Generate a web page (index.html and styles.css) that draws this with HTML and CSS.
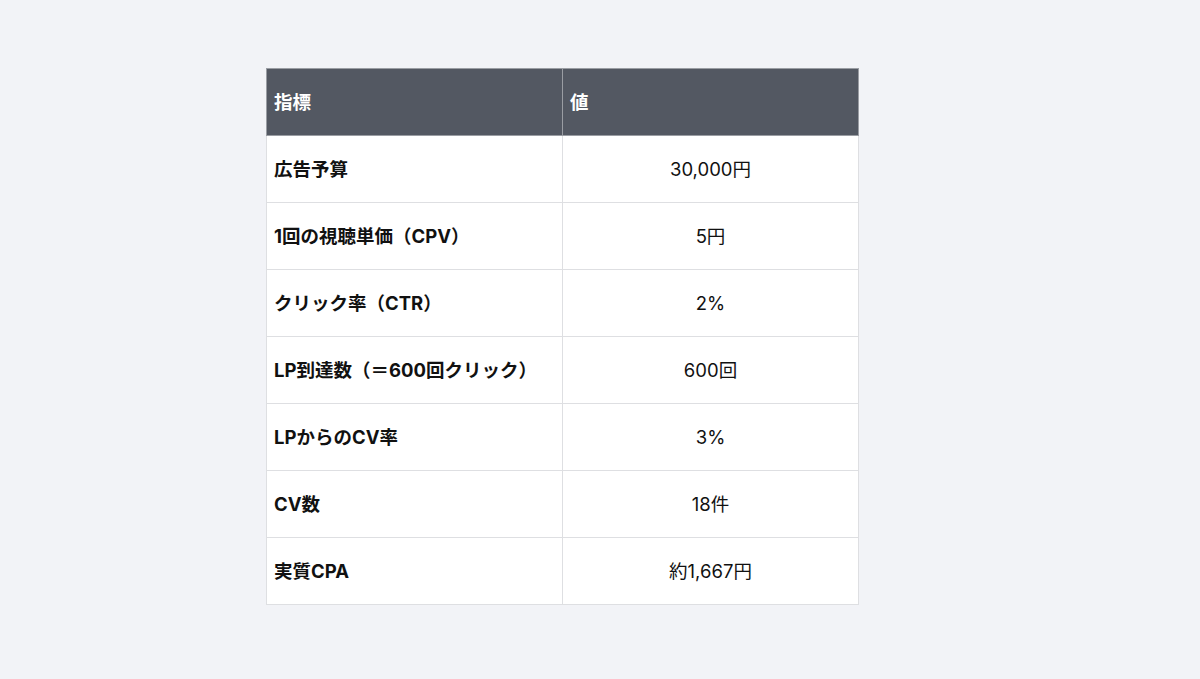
FILE: index.html
```html
<!DOCTYPE html>
<html lang="ja">
<head>
    <meta charset="UTF-8">
    <title>指標</title>
    <link rel="stylesheet" href="styles.css">
</head>
<body>
    <div class="wrap">
        <table class="metrics">
            <thead>
                <tr><th>指標</th><th>値</th></tr>
            </thead>
            <tbody>
                <tr><td class="label">広告予算</td><td class="value">30,000円</td></tr>
                <tr><td class="label">1回の視聴単価（CPV）</td><td class="value">5円</td></tr>
                <tr><td class="label">クリック率（CTR）</td><td class="value">2%</td></tr>
                <tr><td class="label">LP到達数（＝600回クリック）</td><td class="value">600回</td></tr>
                <tr><td class="label">LPからのCV率</td><td class="value">3%</td></tr>
                <tr><td class="label">CV数</td><td class="value">18件</td></tr>
                <tr><td class="label">実質CPA</td><td class="value">約1,667円</td></tr>
            </tbody>
        </table>
    </div>
</body>
</html>
```

FILE: styles.css
```css
body {
    margin: 0;
    background: #f2f3f7;
    font-family: Inter, "Noto Sans CJK JP", sans-serif;
    color: #111;
}
.wrap {
    padding: 68px 0 0 266px;
}
.metrics {
    width: 593px;
    border-collapse: collapse;
    background: #fff;
    font-size: 18.5px;
}
.metrics th,
.metrics td {
    width: 50%;
    height: 67px;
    padding: 0 7px;
    box-sizing: border-box;
    border: 1px solid #dedfe2;
    line-height: 26px;
}
.metrics th {
    background: #535862;
    color: #fff;
    font-weight: 700;
    text-align: left;
    border-color: #9a9da3;
}
.metrics .label {
    font-weight: 700;
}
.metrics .value {
    text-align: center;
    font-weight: 400;
}
```
